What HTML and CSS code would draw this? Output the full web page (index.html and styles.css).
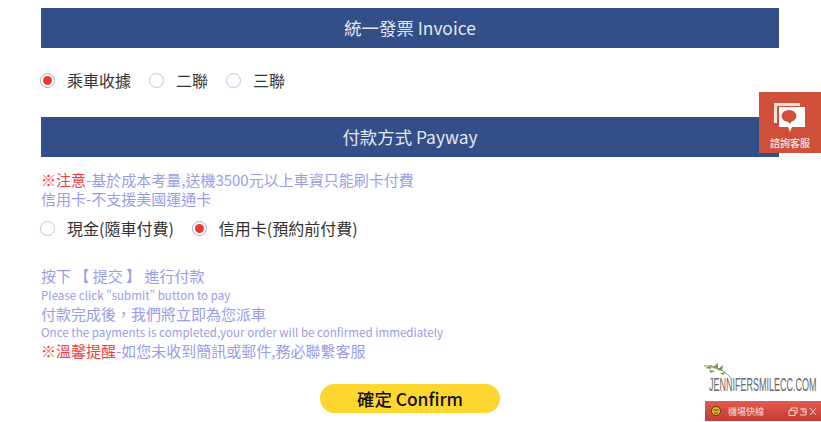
FILE: index.html
```html
<!DOCTYPE html>
<html lang="zh-Hant">
<head>
    <meta charset="UTF-8">
    <meta name="viewport" content="width=device-width, initial-scale=1.0">
    <title>Invoice and Payway</title>
    <link rel="stylesheet" href="styles.css">
</head>
<body>

    <div class="page">
        <h2 class="section-title">統一發票 Invoice</h2>
        <div class="radio-row invoice-row">
            <label class="radio"><span class="dot checked"></span>乘車收據</label>
            <label class="radio"><span class="dot"></span>二聯</label>
            <label class="radio"><span class="dot"></span>三聯</label>
        </div>

        <h2 class="section-title">付款方式 Payway</h2>
        <div class="notice">
            <p><span class="warn">※注意</span>-基於成本考量,送機3500元以上車資只能刷卡付費</p>
            <p>信用卡-不支援美國運通卡</p>
        </div>
        <div class="radio-row pay-row">
            <label class="radio"><span class="dot"></span>現金(隨車付費)</label>
            <label class="radio"><span class="dot checked"></span>信用卡(預約前付費)</label>
        </div>

        <div class="info">
            <p>按下 【 提交 】 進行付款</p>
            <p class="small">Please click "submit" button to pay</p>
            <p>付款完成後，我們將立即為您派車</p>
            <p class="small">Once the payments is completed,your order will be confirmed immediately</p>
            <p><span class="warn">※溫馨提醒</span>-如您未收到簡訊或郵件,務必聯繫客服</p>
        </div>

        <button class="confirm" type="button">確定 Confirm</button>
    </div>

    <!-- floating service button -->
    <div class="service">
        <svg width="36" height="36" viewBox="0 0 36 36">
            <path d="M2 2h26v3H5v17H2z" fill="#f6e3dc"/>
            <path d="M7 6h26v20H20l-2 5-2-5H7z" fill="#fff"/>
            <ellipse cx="17" cy="15" rx="7.500" ry="6" fill="#cf4f38"/>
            <path d="M15 19l3 4 2-4z" fill="#cf4f38"/>
        </svg>
        <span>諮詢客服</span>
    </div>

    <div class="watermark">
        <svg width="30" height="15" viewBox="0 0 30 15">
            <path d="M1 3c8-1 18 2 27 12" fill="none" stroke="#7d9a52" stroke-width="1"/>
            <path d="M2 5l7-3-1 4zM9 5l6-5 0 6zM14 7l6-5-1 6zM6 7l6 1-4 2zM17 10l6-1-3 3z" fill="#7d9a52"/>
        </svg>
        <span>JENNIFERSMILECC.COM</span>
    </div>

    <div class="chat-bar">
        <svg class="smiley" width="10" height="10" viewBox="0 0 10 10">
            <circle cx="5" cy="5" r="4.500" fill="#e8b92c" stroke="#4d3f12"/>
            <path d="M2.500 4h5M3 6.500c1 1 3 1 4 0" fill="none" stroke="#4d3f12"/>
        </svg>
        <span class="chat-title">機場快線</span>
        <svg width="28" height="9" viewBox="0 0 28 9">
            <path d="M1 3.500h6v5H1zM3 3.500v-2.500h6v5H7M12 2h6v6h-6M15 1v4h4M22 1l6 7M28 1l-6 7" fill="none" stroke="#f6d6d0" stroke-width="1"/>
        </svg>
    </div>

</body>
</html>
```

FILE: styles.css
```css
html, body {
    margin: 0;
    height: 422px;
    overflow: hidden;
}
body {
    font-family: "Noto Sans CJK TC", "Noto Sans", sans-serif;
    background-color: white;
}
p {
    margin: 0;
}
.page {
    width: 738px;
    margin-left: 41px;
    padding-top: 8px;
    display: flex;
    flex-direction: column;
}
.section-title {
    margin: 0;
    height: 40px;
    line-height: 40px;
    background-color: #324f8a;
    color: #e4e8f0;
    font-size: 17.400px;
    font-weight: 400;
    text-align: center;
}
.radio-row {
    display: flex;
    align-items: center;
    gap: 18px;
    margin-left: -1px;
    color: #333;
    font-size: 16px;
}
.invoice-row {
    height: 69px;
    padding-bottom: 5px;
    box-sizing: border-box;
}
.pay-row {
    height: 28px;
    margin-top: 6px;
}
.radio {
    display: flex;
    align-items: center;
    gap: 12px;
}
.dot {
    box-sizing: border-box;
    width: 15px;
    height: 15px;
    border: 1px solid #c2c0ee;
    border-radius: 50%;
    background-color: white;
    display: flex;
    align-items: center;
    justify-content: center;
}
.dot.checked {
    border-color: #aaa8e6;
}
.dot.checked::after {
    content: "";
    width: 9px;
    height: 9px;
    border-radius: 50%;
    background-color: #ee3a2e;
}
.notice {
    margin-top: 13px;
    color: #9a9ce8;
    font-size: 15px;
    line-height: 19px;
}
.warn {
    color: #f53c3c;
}
.info {
    margin-top: 25px;
    color: #9a9ce8;
    font-size: 15px;
    line-height: 18.800px;
}
.small {
    font-size: 11.600px;
}
.confirm {
    align-self: center;
    width: 180px;
    height: 29px;
    margin-top: 23px;
    padding: 0;
    border: none;
    border-radius: 15px;
    background-color: #fdd62f;
    color: #111;
    font-family: inherit;
    font-size: 17.400px;
    font-weight: 500;
    cursor: pointer;
}
.service {
    position: absolute;
    top: 92px;
    right: 0;
    width: 62px;
    height: 61px;
    box-sizing: border-box;
    padding-top: 9px;
    background-color: #cf4f38;
    color: #f8e8e2;
    font-size: 10px;
    font-weight: 500;
    line-height: 12px;
    display: flex;
    flex-direction: column;
    align-items: center;
}
.watermark {
    position: absolute;
    top: 363px;
    left: 703px;
    color: #666;
    font-family: "Liberation Sans", sans-serif;
    font-size: 18px;
    line-height: 14px;
    white-space: nowrap;
}
.watermark svg {
    display: block;
}
.watermark span {
    display: block;
    width: 108px;
    margin-left: 6px;
    transform: scaleX(0.5);
    transform-origin: left;
}
.chat-bar {
    position: absolute;
    top: 401px;
    left: 705px;
    width: 116px;
    height: 20px;
    box-sizing: border-box;
    padding: 0 5px 0 6px;
    background: linear-gradient(#e25a50, #c53a33);
    color: #f8e0da;
    font-size: 9px;
    display: flex;
    align-items: center;
}
.chat-title {
    margin-left: 7px;
    flex: 1;
}
```
